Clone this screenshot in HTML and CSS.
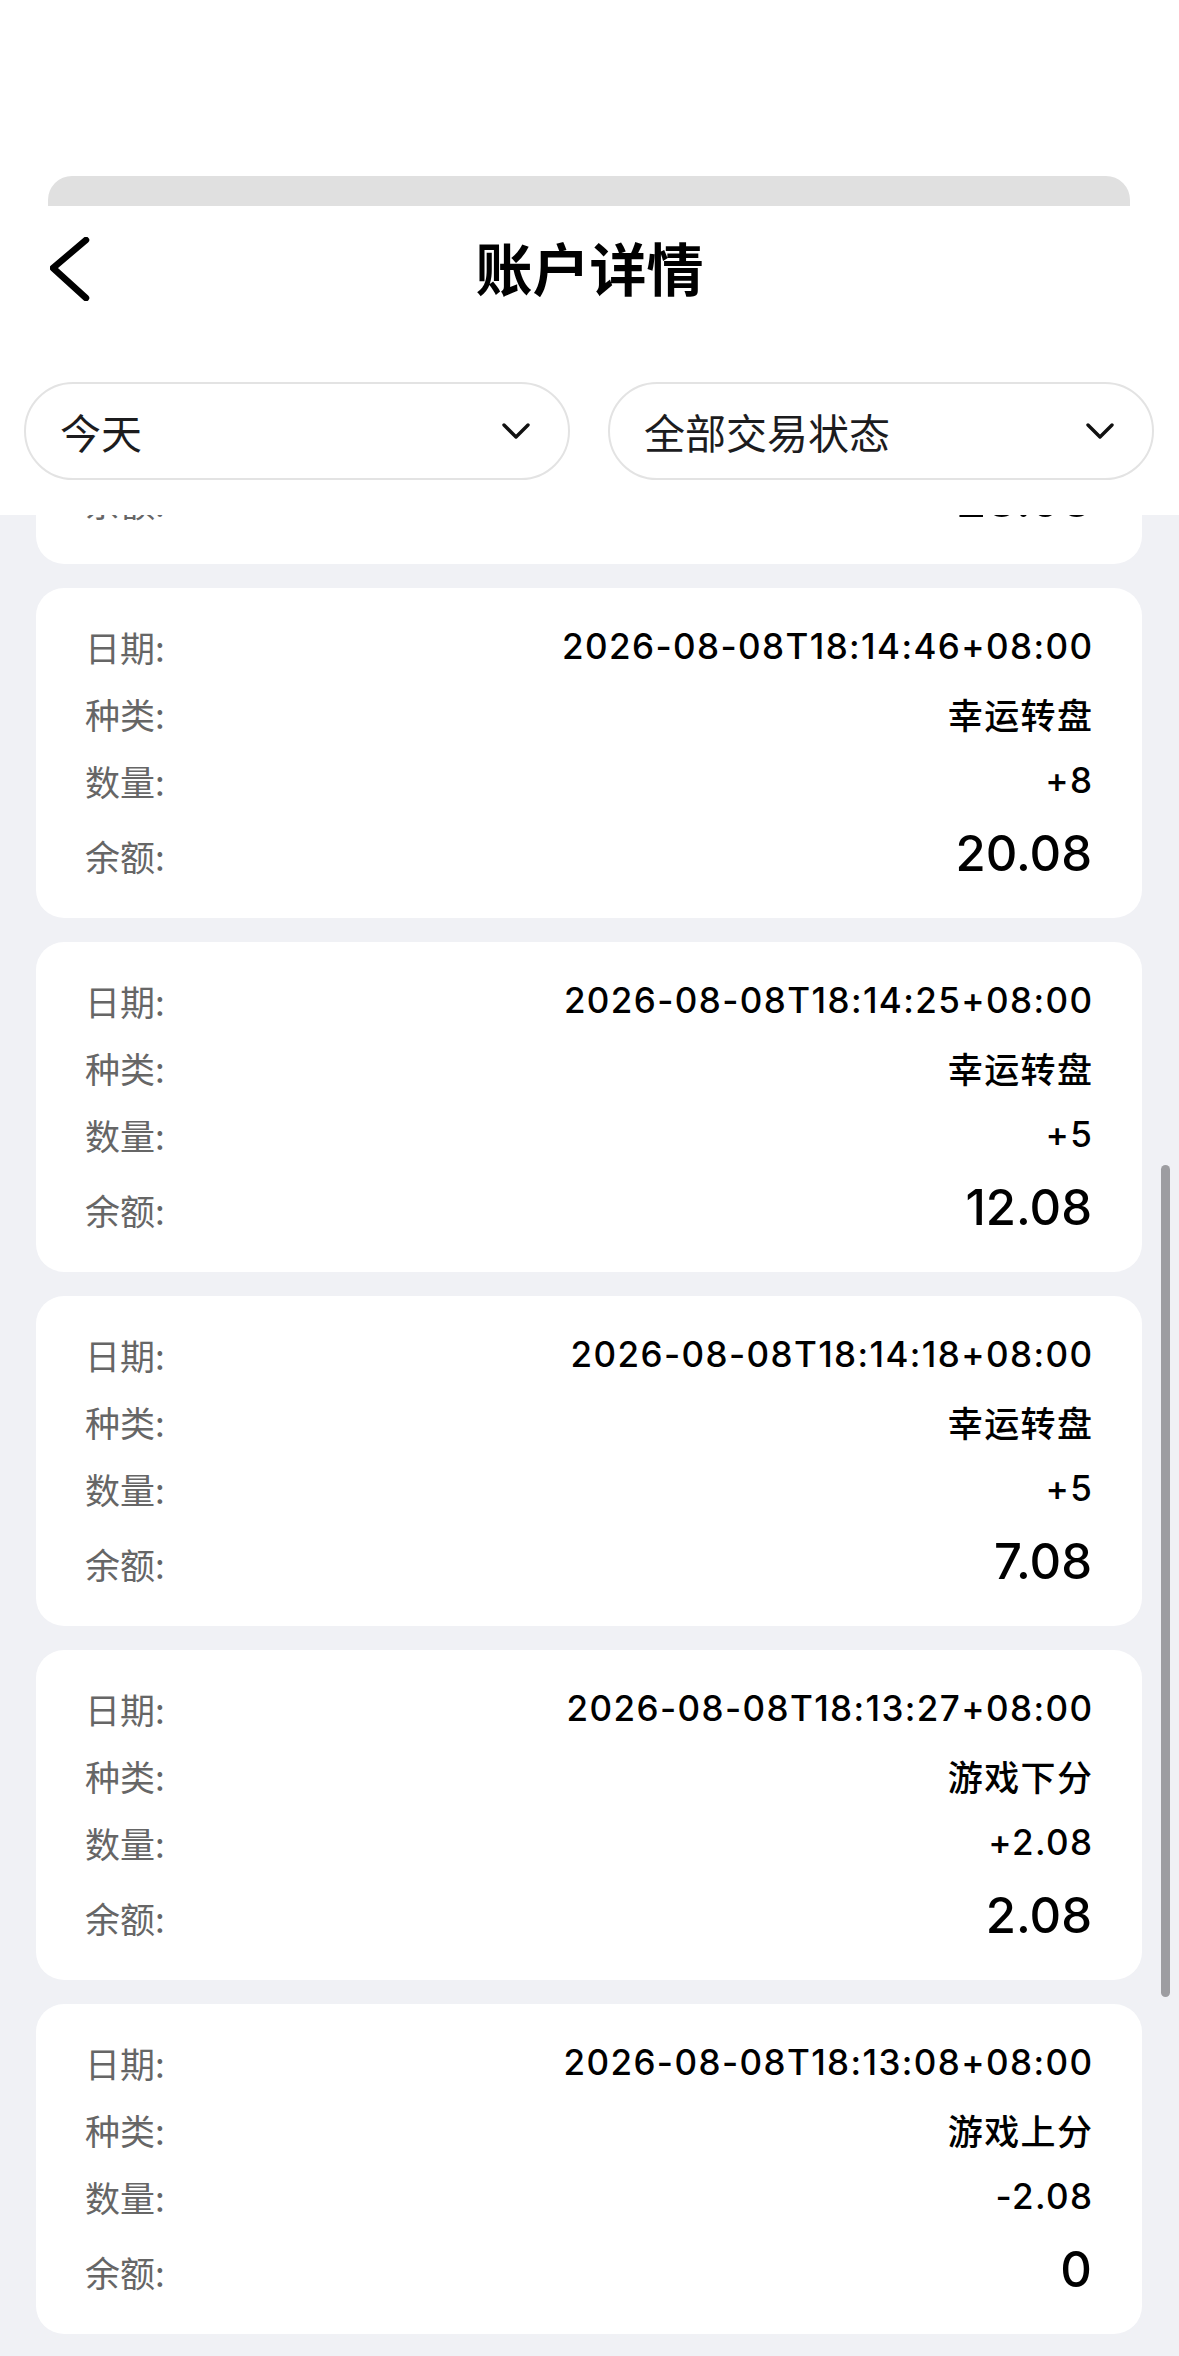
FILE: index.html
```html
<!DOCTYPE html>
<html lang="zh-CN">
<head>
    <meta charset="UTF-8">
    <meta name="viewport" content="width=device-width, initial-scale=1.0">
    <title>账户详情</title>
    <link rel="stylesheet" href="styles.css">
</head>
<body>
    <!-- Top (sheet header) -->
    <div class="top">
        <div class="sheet-peek"></div>
        <header class="nav">
            <button class="back-btn" aria-label="返回">
                <svg width="40" height="64" viewBox="0 0 40 64">
                    <polyline points="36,3 3,31 36,61" fill="none" stroke="#000" stroke-width="6.5" stroke-linecap="round" stroke-linejoin="round"/>
                </svg>
            </button>
            <h1>账户详情</h1>
        </header>
        <div class="filters">
            <div class="select">
                <span>今天</span>
                <svg width="28" height="17" viewBox="0 0 28 17"><polyline points="2,2 14,14 26,2" fill="none" stroke="#111" stroke-width="3.4" stroke-linecap="round" stroke-linejoin="round"/></svg>
            </div>
            <div class="select">
                <span>全部交易状态</span>
                <svg width="28" height="17" viewBox="0 0 28 17"><polyline points="2,2 14,14 26,2" fill="none" stroke="#111" stroke-width="3.4" stroke-linecap="round" stroke-linejoin="round"/></svg>
            </div>
        </div>
    </div>

    <!-- Transaction list -->
    <main class="list">
        <div class="cards">
            <div class="card">
                <div class="row"><span class="label">日期:</span><span class="value">2026-08-08T18:14:58+08:00</span></div>
                <div class="row"><span class="label">种类:</span><span class="value">幸运转盘</span></div>
                <div class="row"><span class="label">数量:</span><span class="value">+8</span></div>
                <div class="row balance"><span class="label">余额:</span><span class="value">28.08</span></div>
            </div>
            <div class="card">
                <div class="row"><span class="label">日期:</span><span class="value">2026-08-08T18:14:46+08:00</span></div>
                <div class="row"><span class="label">种类:</span><span class="value">幸运转盘</span></div>
                <div class="row"><span class="label">数量:</span><span class="value">+8</span></div>
                <div class="row balance"><span class="label">余额:</span><span class="value">20.08</span></div>
            </div>
            <div class="card">
                <div class="row"><span class="label">日期:</span><span class="value">2026-08-08T18:14:25+08:00</span></div>
                <div class="row"><span class="label">种类:</span><span class="value">幸运转盘</span></div>
                <div class="row"><span class="label">数量:</span><span class="value">+5</span></div>
                <div class="row balance"><span class="label">余额:</span><span class="value">12.08</span></div>
            </div>
            <div class="card">
                <div class="row"><span class="label">日期:</span><span class="value">2026-08-08T18:14:18+08:00</span></div>
                <div class="row"><span class="label">种类:</span><span class="value">幸运转盘</span></div>
                <div class="row"><span class="label">数量:</span><span class="value">+5</span></div>
                <div class="row balance"><span class="label">余额:</span><span class="value">7.08</span></div>
            </div>
            <div class="card">
                <div class="row"><span class="label">日期:</span><span class="value">2026-08-08T18:13:27+08:00</span></div>
                <div class="row"><span class="label">种类:</span><span class="value">游戏下分</span></div>
                <div class="row"><span class="label">数量:</span><span class="value">+2.08</span></div>
                <div class="row balance"><span class="label">余额:</span><span class="value">2.08</span></div>
            </div>
            <div class="card">
                <div class="row"><span class="label">日期:</span><span class="value">2026-08-08T18:13:08+08:00</span></div>
                <div class="row"><span class="label">种类:</span><span class="value">游戏上分</span></div>
                <div class="row"><span class="label">数量:</span><span class="value">-2.08</span></div>
                <div class="row balance"><span class="label">余额:</span><span class="value">0</span></div>
            </div>
        </div>
        <div class="scrollbar"></div>
    </main>
</body>
</html>
```

FILE: styles.css
```css
:root {
    --page-bg: #f0f1f5; /* list background */
    --card-bg: #ffffff;
    --label-color: #666666;
    --text-color: #000000;
    --line-color: #e3e3e3;
}

/* General Reset */
* {
    margin: 0;
    padding: 0;
    box-sizing: border-box;
}

body {
    font-family: Inter, "Noto Sans CJK SC", sans-serif;
    background-color: var(--page-bg);
    color: var(--text-color);
    width: 1179px;
    height: 2356px;
    overflow: hidden;
}

/* Header area */
.top {
    background: #fff;
    padding-top: 176px;
    position: relative;
    z-index: 2;
}

.sheet-peek {
    height: 30px;
    margin: 0 49px 0 48px;
    background: #e0e0e0;
    border-radius: 24px 24px 0 0;
}

.nav {
    height: 128px;
    padding-bottom: 8px;
    display: flex;
    align-items: center;
    justify-content: center;
    position: relative;
}

.nav h1 {
    font-family: "Noto Sans CJK SC", sans-serif;
    font-size: 57px;
    font-weight: 700;
    line-height: 1;
}

.back-btn {
    position: absolute;
    left: 50px;
    top: 31px;
    border: none;
    background: none;
    display: flex;
}

/* Filter dropdowns */
.filters {
    display: flex;
    gap: 38px;
    padding: 48px 25px 35px 24px;
}

.select {
    flex: 1;
    height: 98px;
    border: 2px solid var(--line-color);
    border-radius: 49px;
    display: flex;
    align-items: center;
    justify-content: space-between;
    padding: 0 38px 0 34px;
    font-family: "Noto Sans CJK SC", sans-serif;
    font-size: 41px;
    color: #1c1c1e;
}

/* List */
.list {
    height: 1841px;
    overflow: hidden;
    position: relative;
}

.cards {
    margin-top: -281px;
    padding: 0 37px 0 36px;
    display: flex;
    flex-direction: column;
    gap: 24px;
}

.card {
    background: var(--card-bg);
    border-radius: 28px;
    height: 330px;
    padding: 33px 50px 0 49px;
}

.row {
    display: flex;
    justify-content: space-between;
    align-items: center;
    height: 50px;
    margin-top: 17px;
}

.row:first-child {
    margin-top: 0;
}

.label {
    font-family: "Noto Sans CJK SC", sans-serif;
    font-size: 35px;
    color: var(--label-color);
}

.value {
    font-size: 35px;
    font-weight: 500;
    letter-spacing: 1.4px;
    margin-right: -1.4px;
}

.row.balance {
    height: 62px;
    margin-top: 19px;
    align-items: baseline;
}

.row.balance .value {
    font-size: 49px;
    letter-spacing: 0;
    margin-right: 0;
}

/* Scroll indicator (overlay) */
.scrollbar {
    position: absolute;
    left: 1161px;
    top: 650px;
    width: 9px;
    height: 832px;
    border-radius: 5px;
    background: #9d9da1;
}
```
